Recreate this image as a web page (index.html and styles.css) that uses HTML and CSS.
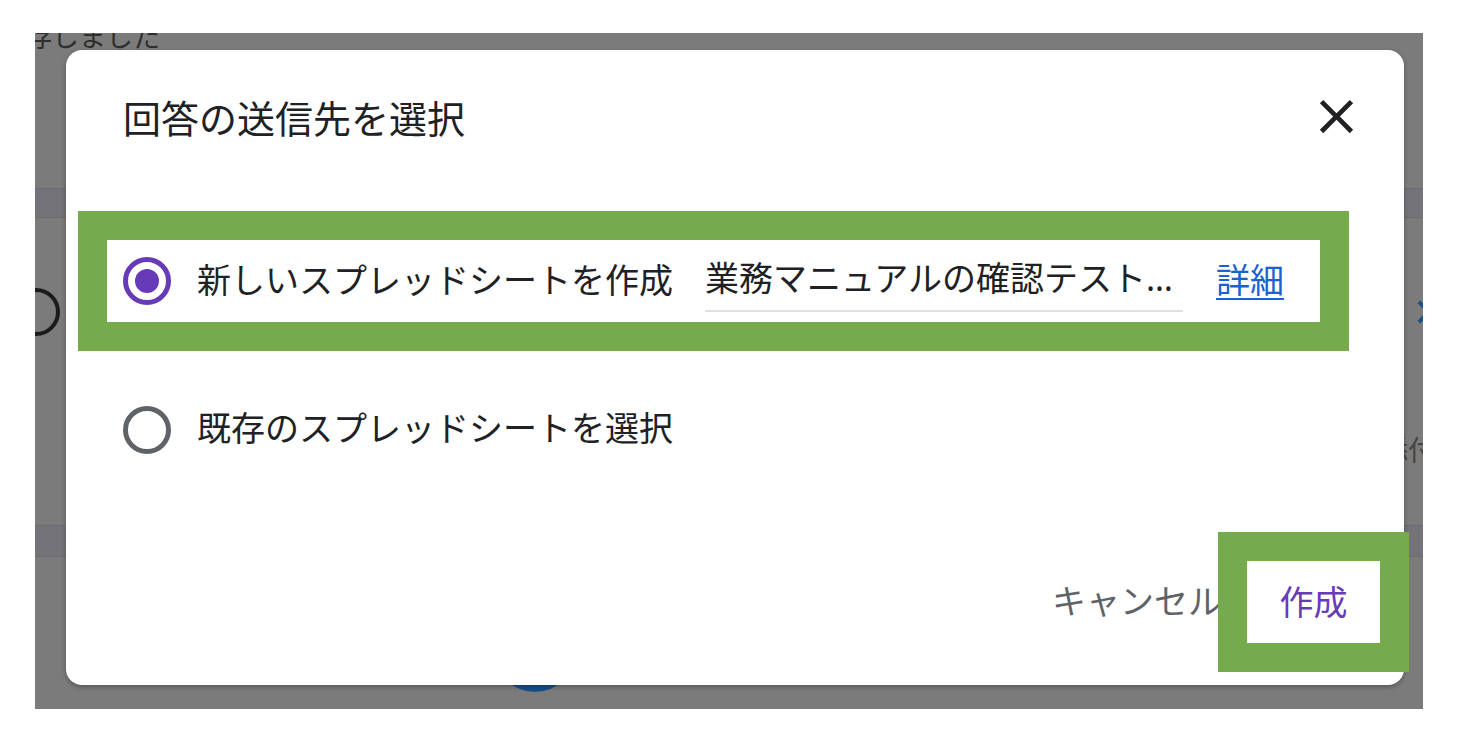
FILE: index.html
```html
<!DOCTYPE html>
<html lang="ja">

<head>
    <meta charset="UTF-8">
    <meta name="viewport" content="width=device-width, initial-scale=1.0">
    <title>回答の送信先を選択</title>
    <link rel="stylesheet" href="styles.css">
</head>

<body>
    <div class="screen">
        <!-- 背景のフォーム画面 (オーバーレイで暗く見える) -->
        <div class="page">
            <div class="saved-msg">存しました</div>
            <div class="stripe"></div>
            <div class="page-row">
                <span class="page-circle"></span>
                <svg class="page-chevron" viewBox="0 0 24 24" width="46" height="46">
                    <path d="M10 6L8.59 7.41 13.17 12l-4.58 4.59L10 18l6-6z" fill="#1a4f8f" />
                </svg>
            </div>
            <div class="page-row page-text">ファイルを添付</div>
            <div class="stripe stripe-low"></div>
            <div class="page-fab"></div>
        </div>

        <div class="dialog">
            <div class="dialog-head">
                <h2>回答の送信先を選択</h2>
                <button class="close-btn" aria-label="閉じる">
                    <svg viewBox="0 0 24 24" width="57" height="57">
                        <path d="M19 6.41L17.59 5 12 10.59 6.41 5 5 6.41 10.59 12 5 17.59 6.41 19 12 13.41 17.59 19 19 17.59 13.41 12z" fill="#202124" />
                    </svg>
                </button>
            </div>

            <div class="choice highlight">
                <span class="radio checked"></span>
                <span class="choice-label">新しいスプレッドシートを作成</span>
                <div class="sheet-name">業務マニュアルの確認テスト回答</div>
                <a class="more-link" href="#">詳細</a>
            </div>

            <div class="choice second">
                <span class="radio"></span>
                <span class="choice-label">既存のスプレッドシートを選択</span>
            </div>

            <div class="dialog-foot">
                <button class="btn-cancel">キャンセル</button>
                <button class="btn-create">作成</button>
            </div>
        </div>
    </div>
</body>

</html>
```

FILE: styles.css
```css
body {
    margin: 0;
    background-color: #fff;
    font-family: "Noto Sans CJK JP", sans-serif;
}

.screen {
    position: relative;
    margin: 33px 0 0 35px;
    width: 1388px;
    height: 676px;
    background-color: #7b7b7b;
    overflow: hidden;
}

/* background page */
.saved-msg {
    margin: -11px 0 0 -10px;
    font-size: 27px;
    line-height: 27px;
    color: #2e2e2e;
    white-space: nowrap;
}

.stripe {
    margin-top: 139px;
    height: 28px;
    background-color: #747379;
    border-top: 1px solid #6c6c6c;
    border-bottom: 1px solid #6c6c6c;
}

.stripe-low {
    margin-top: 62px;
    height: 30px;
}

.page-row {
    display: flex;
    align-items: center;
    justify-content: space-between;
    margin-top: 70px;
}

.page-circle {
    width: 48px;
    height: 48px;
    margin-left: -23px;
    border: 4px solid #1b1b1b;
    border-radius: 50%;
    box-sizing: border-box;
}

.page-chevron {
    margin-right: -24px;
}

.page-text {
    justify-content: flex-end;
    margin: 99px -13px 0 0;
    font-size: 28px;
    line-height: 28px;
    color: #454545;
}

.page-fab {
    margin: 55px 0 0 460px;
    width: 80px;
    height: 80px;
    border-radius: 50%;
    background-color: #164f8c;
}

/* dialog */
.dialog {
    position: absolute;
    left: 31px;
    top: 17px;
    width: 1338px;
    height: 635px;
    display: flex;
    flex-direction: column;
    background-color: #fff;
    border-radius: 16px;
    box-shadow: 0 2px 5px rgba(0, 0, 0, 0.3);
}

.dialog-head {
    display: flex;
    align-items: center;
    justify-content: space-between;
    height: 57px;
    padding: 38px 39px 0 57px;
}

.dialog-head h2 {
    margin: 0;
    font-size: 38px;
    font-weight: 400;
    line-height: 48px;
    color: #202124;
}

.close-btn {
    padding: 0;
    border: none;
    background: none;
    cursor: pointer;
}

.close-btn svg {
    display: block;
}

.choice {
    display: flex;
    align-items: center;
    font-size: 34px;
    color: #202124;
}

.choice.highlight {
    margin: 66px 0 0 12px;
    width: 1271px;
    height: 140px;
    padding: 0 36px 0 16px;
    box-sizing: border-box;
    border: 29px solid #75aa4d;
    background-color: #fff;
}

.choice.second {
    margin: 52px 0 0 57px;
}

.radio {
    display: flex;
    align-items: center;
    justify-content: center;
    flex: none;
    width: 48px;
    height: 48px;
    margin-right: 26px;
    border: 5px solid #5f6368;
    border-radius: 50%;
    box-sizing: border-box;
}

.radio.checked {
    border-color: #673ab7;
}

.radio.checked::after {
    content: "";
    width: 24px;
    height: 24px;
    border-radius: 50%;
    background-color: #673ab7;
}

.choice-label {
    padding-bottom: 5px;
    line-height: 48px;
    white-space: nowrap;
}

.sheet-name {
    width: 478px;
    margin-top: 2px;
    margin-left: 32px;
    padding: 2px 0 8px;
    font-family: "Noto Sans", "Noto Sans CJK JP", sans-serif;
    line-height: 48px;
    white-space: nowrap;
    overflow: hidden;
    text-overflow: ellipsis;
    border-bottom: 2px solid #e0e0e0;
}

.more-link {
    margin-left: 33px;
    padding-bottom: 5px;
    color: #1a62d2;
    text-decoration: underline;
    text-underline-offset: 5px;
    text-decoration-thickness: 2px;
    white-space: nowrap;
}

.dialog-foot {
    display: flex;
    align-items: center;
    justify-content: flex-end;
    margin: auto -5px 13px 0;
}

.dialog-foot button {
    font-family: "Noto Sans CJK JP", sans-serif;
    font-size: 34px;
    cursor: pointer;
}

.btn-cancel {
    margin-right: -4px;
    padding: 0 0 4px;
    border: none;
    background: none;
    color: #5f6368;
    line-height: 48px;
}

.btn-create {
    width: 191px;
    height: 140px;
    padding: 0 0 4px;
    border: 29px solid #75aa4d;
    background-color: #fff;
    color: #673ab7;
}
```
